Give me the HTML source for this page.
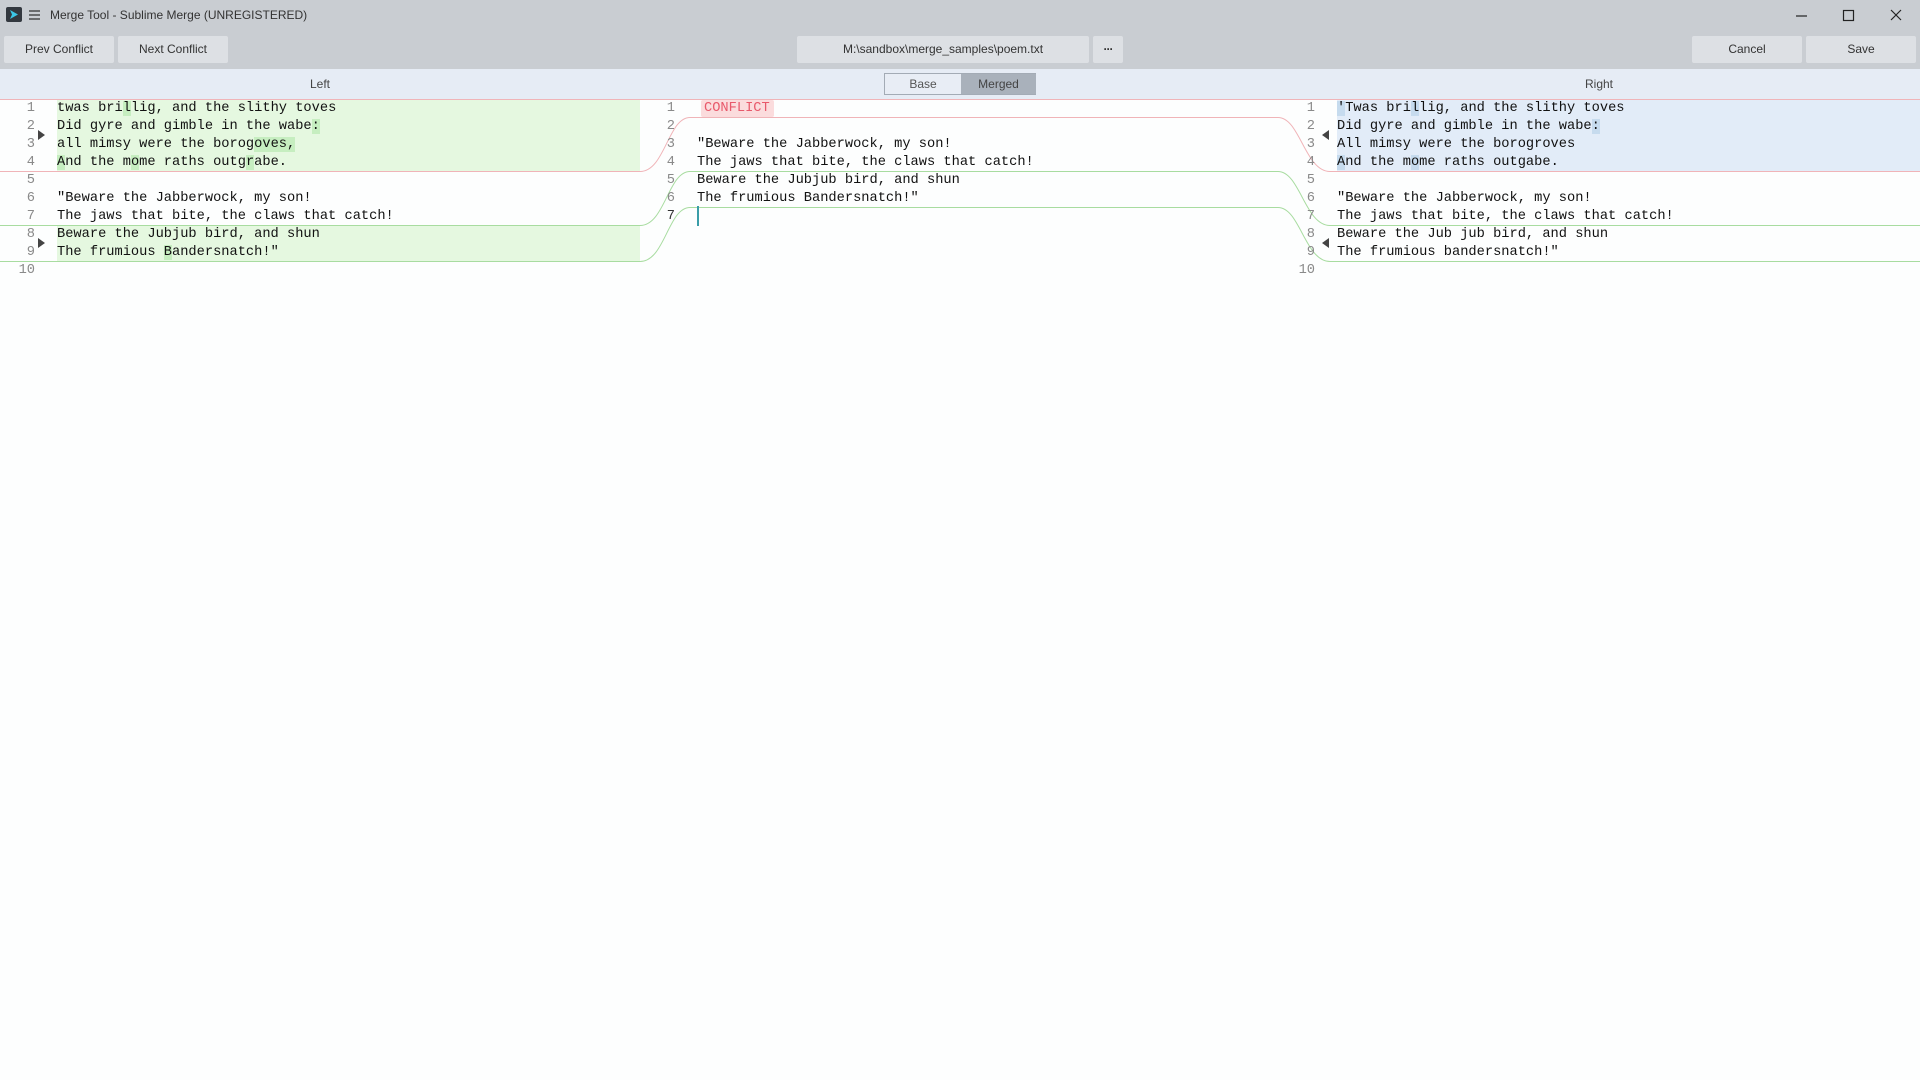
<!DOCTYPE html>
<html><head><meta charset="utf-8"><style>
*{margin:0;padding:0;box-sizing:border-box}
body{width:1920px;height:1080px;background:#fdfefe;position:relative;overflow:hidden;font-family:"Liberation Sans",sans-serif}
.abs{position:absolute}
.btn{position:absolute;top:36px;height:27px;background:#dde0e4;border-radius:2px;font-size:12px;color:#333;text-align:center;line-height:27px}
.code{position:absolute;font-family:"Liberation Mono",monospace;font-size:13.7px;line-height:18px;white-space:pre;color:#111}
.num{position:absolute;font-family:"Liberation Mono",monospace;font-size:13.7px;line-height:18px;color:#8a8a8a;text-align:right;width:30px;white-space:pre}
.g{background:#c6eec0}.b{background:#c6dbee}
.lbl{position:absolute;top:77px;font-size:12px;color:#444}
</style></head><body>
<div class="abs" style="left:0;top:0;width:1920px;height:69px;background:#c9cdd2"></div>
<svg class="abs" style="left:6px;top:7px" width="16" height="15"><rect width="16" height="15" rx="2" fill="#33383f"/><path d="M4 3l8 4.5L4 12l2-4.5z" fill="#3cc6e6"/></svg>
<svg class="abs" style="left:29px;top:10px" width="12" height="10"><path d="M0 1h11M0 5h11M0 9h11" stroke="#333" stroke-width="1.2"/></svg>
<div class="abs" style="left:50px;top:8px;font-size:12px;color:#333">Merge Tool - Sublime Merge (UNREGISTERED)</div>
<svg class="abs" style="left:1796px;top:9px" width="110" height="14"><path d="M0 7h11" stroke="#222" stroke-width="1.2"/><rect x="47.5" y="1.5" width="10" height="10" fill="none" stroke="#222" stroke-width="1.2"/><path d="M95 1l10 10M105 1l-10 10" stroke="#222" stroke-width="1.2"/></svg>
<div class="btn" style="left:4px;width:110px">Prev Conflict</div>
<div class="btn" style="left:118px;width:110px">Next Conflict</div>
<div class="btn" style="left:797px;width:292px">M:\sandbox\merge_samples\poem.txt</div>
<div class="btn" style="left:1093px;width:30px;font-weight:bold;letter-spacing:-1px">···</div>
<div class="btn" style="left:1692px;width:110px">Cancel</div>
<div class="btn" style="left:1806px;width:110px">Save</div>
<div class="abs" style="left:0;top:69px;width:1920px;height:30px;background:#e6ecf5"></div>
<div class="lbl" style="left:310px">Left</div>
<div class="lbl" style="left:1585px">Right</div>
<div class="abs" style="left:884px;top:73px;width:152px;height:22px;border:1px solid #a3abb5;background:#e8edf5;font-size:12px;line-height:20px;color:#555">
<span class="abs" style="left:0;width:76px;text-align:center">Base</span>
<span class="abs" style="left:76px;width:75px;height:20px;background:#a9b1bb;text-align:center;color:#444">Merged</span></div>
<div class="abs" style="left:57px;top:99px;width:583px;height:72px;background:#e5f8e0"></div>
<div class="abs" style="left:57px;top:225px;width:583px;height:36px;background:#e5f8e0"></div>
<div class="abs" style="left:1337px;top:99px;width:583px;height:72px;background:#e2ecf8"></div>
<svg class="abs" style="left:0;top:0" width="1920" height="300">
<g fill="none" stroke-width="1">
<path d="M0 99.5H1920" stroke="#f0b4b8"/>
<path d="M0 171.5H640C665 171.5 668 117.5 690 117.5H1278C1300 117.5 1305 171.5 1330 171.5H1920" stroke="#f0b4b8"/>
<path d="M0 225.5H640C665 225.5 668 171.5 690 171.5H1278C1300 171.5 1305 225.5 1330 225.5H1920" stroke="#a8dca0"/>
<path d="M0 261.5H640C665 261.5 668 207.5 690 207.5H1278C1300 207.5 1305 261.5 1330 261.5H1920" stroke="#a8dca0"/>
</g>
<path d="M38 130l7 5-7 5zM38 238l7 5-7 5z" fill="#444"/>
<path d="M1329 130l-7 5 7 5zM1329 238l-7 5 7 5z" fill="#444"/>
</svg>
<div class="num" style="left:5px;top:100px">1
2
3
4
5
6
7
8
9
10</div>
<div class="code" style="left:57px;top:100px">twas bri<span class="g">l</span>lig, and the slithy toves
Did gyre and gimble in the wabe<span class="g">:</span>
all mimsy were the borog<span class="g">oves,</span>
<span class="g">A</span>nd the m<span class="g">o</span>me raths outg<span class="g">r</span>abe.

"Beware the Jabberwock, my son!
The jaws that bite, the claws that catch!
Beware the Jubjub bird, and shun
The frumious <span class="g">B</span>andersnatch!"</div>
<div class="num" style="left:645px;top:100px">1
2
3
4
5
6
<span style="color:#333">7</span></div>
<div class="abs" style="left:701px;top:100px;width:73px;height:17px;background:#fbdcdd;border-radius:2px"></div>
<div class="code" style="left:704px;top:100px;color:#e8596b">CONFLICT</div>
<div class="code" style="left:697px;top:136px">"Beware the Jabberwock, my son!
The jaws that bite, the claws that catch!
Beware the Jubjub bird, and shun
The frumious Bandersnatch!"</div>
<div class="abs" style="left:697px;top:206px;width:2px;height:20px;background:#3a9da8"></div>
<div class="num" style="left:1285px;top:100px">1
2
3
4
5
6
7
8
9
10</div>
<div class="code" style="left:1337px;top:100px"><span class="b">'</span>Twas bri<span class="b">l</span>lig, and the slithy toves
Did gyre and gimble in the wabe<span class="b">:</span>
All mimsy were the borogroves
<span class="b">A</span>nd the m<span class="b">o</span>me raths outgabe.

"Beware the Jabberwock, my son!
The jaws that bite, the claws that catch!
Beware the Jub jub bird, and shun
The frumious bandersnatch!"</div>
</body></html>
